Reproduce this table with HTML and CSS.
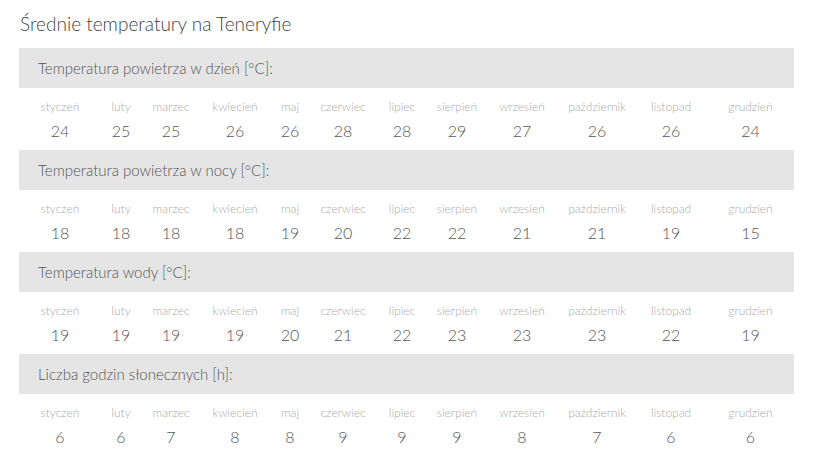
FILE: index.html
```html
<!DOCTYPE html>
<html lang="pl">
<head>
<meta charset="utf-8">
<title>Średnie temperatury na Teneryfie</title>
<link rel="stylesheet" href="styles.css">
</head>
<body>
<div class="page">
  <h2 class="title">Średnie temperatury na Teneryfie</h2>

  <section class="block">
    <div class="bar">Temperatura powietrza w dzień [°C]:</div>
    <div class="months">
      <div class="name">styczeń</div><div class="name">luty</div><div class="name">marzec</div><div class="name">kwiecień</div><div class="name">maj</div><div class="name">czerwiec</div><div class="name">lipiec</div><div class="name">sierpień</div><div class="name">wrzesień</div><div class="name">październik</div><div class="name">listopad</div><div class="name">grudzień</div>
      <div class="val">24</div><div class="val">25</div><div class="val">25</div><div class="val">26</div><div class="val">26</div><div class="val">28</div><div class="val">28</div><div class="val">29</div><div class="val">27</div><div class="val">26</div><div class="val">26</div><div class="val">24</div>
    </div>
  </section>

  <section class="block">
    <div class="bar">Temperatura powietrza w nocy [°C]:</div>
    <div class="months">
      <div class="name">styczeń</div><div class="name">luty</div><div class="name">marzec</div><div class="name">kwiecień</div><div class="name">maj</div><div class="name">czerwiec</div><div class="name">lipiec</div><div class="name">sierpień</div><div class="name">wrzesień</div><div class="name">październik</div><div class="name">listopad</div><div class="name">grudzień</div>
      <div class="val">18</div><div class="val">18</div><div class="val">18</div><div class="val">18</div><div class="val">19</div><div class="val">20</div><div class="val">22</div><div class="val">22</div><div class="val">21</div><div class="val">21</div><div class="val">19</div><div class="val">15</div>
    </div>
  </section>

  <section class="block">
    <div class="bar">Temperatura wody [°C]:</div>
    <div class="months">
      <div class="name">styczeń</div><div class="name">luty</div><div class="name">marzec</div><div class="name">kwiecień</div><div class="name">maj</div><div class="name">czerwiec</div><div class="name">lipiec</div><div class="name">sierpień</div><div class="name">wrzesień</div><div class="name">październik</div><div class="name">listopad</div><div class="name">grudzień</div>
      <div class="val">19</div><div class="val">19</div><div class="val">19</div><div class="val">19</div><div class="val">20</div><div class="val">21</div><div class="val">22</div><div class="val">23</div><div class="val">23</div><div class="val">23</div><div class="val">22</div><div class="val">19</div>
    </div>
  </section>

  <section class="block">
    <div class="bar">Liczba godzin słonecznych [h]:</div>
    <div class="months">
      <div class="name">styczeń</div><div class="name">luty</div><div class="name">marzec</div><div class="name">kwiecień</div><div class="name">maj</div><div class="name">czerwiec</div><div class="name">lipiec</div><div class="name">sierpień</div><div class="name">wrzesień</div><div class="name">październik</div><div class="name">listopad</div><div class="name">grudzień</div>
      <div class="val">6</div><div class="val">6</div><div class="val">7</div><div class="val">8</div><div class="val">8</div><div class="val">9</div><div class="val">9</div><div class="val">9</div><div class="val">8</div><div class="val">7</div><div class="val">6</div><div class="val">6</div>
    </div>
  </section>
</div>
</body>
</html>
```

FILE: styles.css
```css
html, body {
  margin: 0;
  padding: 0;
  background: #fff;
}
body {
  font-family: Lato, "Open Sans", "Liberation Sans", sans-serif;
  font-weight: 300;
  color: #555;
}
.page {
  width: 775px;
  padding: 0 0 0 19px;
}
.title {
  margin: 0;
  padding: 11px 0 0 1px;
  height: 48px;
  box-sizing: border-box;
  font-size: 19px;
  font-weight: 300;
  line-height: 26px;
  color: #444;
}
.block {
  display: block;
  height: 102px;
}
.bar {
  height: 40px;
  background: #e5e5e5;
  padding: 0 19px;
  font-size: 15px;
  line-height: 40px;
  color: #555;
}
.months {
  display: grid;
  grid-template-columns: 82px 40px 60px 68px 42px 64px 54px 56px 74px 76px 72px 87px;
  grid-template-rows: 27px 35px;
  text-align: center;
}
.name {
  font-size: 12px;
  color: #aaa;
  line-height: 16px;
  padding-top: 11px;
  white-space: nowrap;
}
.val {
  font-size: 16px;
  color: #555;
  line-height: 24px;
  padding-top: 4px;
}
```
